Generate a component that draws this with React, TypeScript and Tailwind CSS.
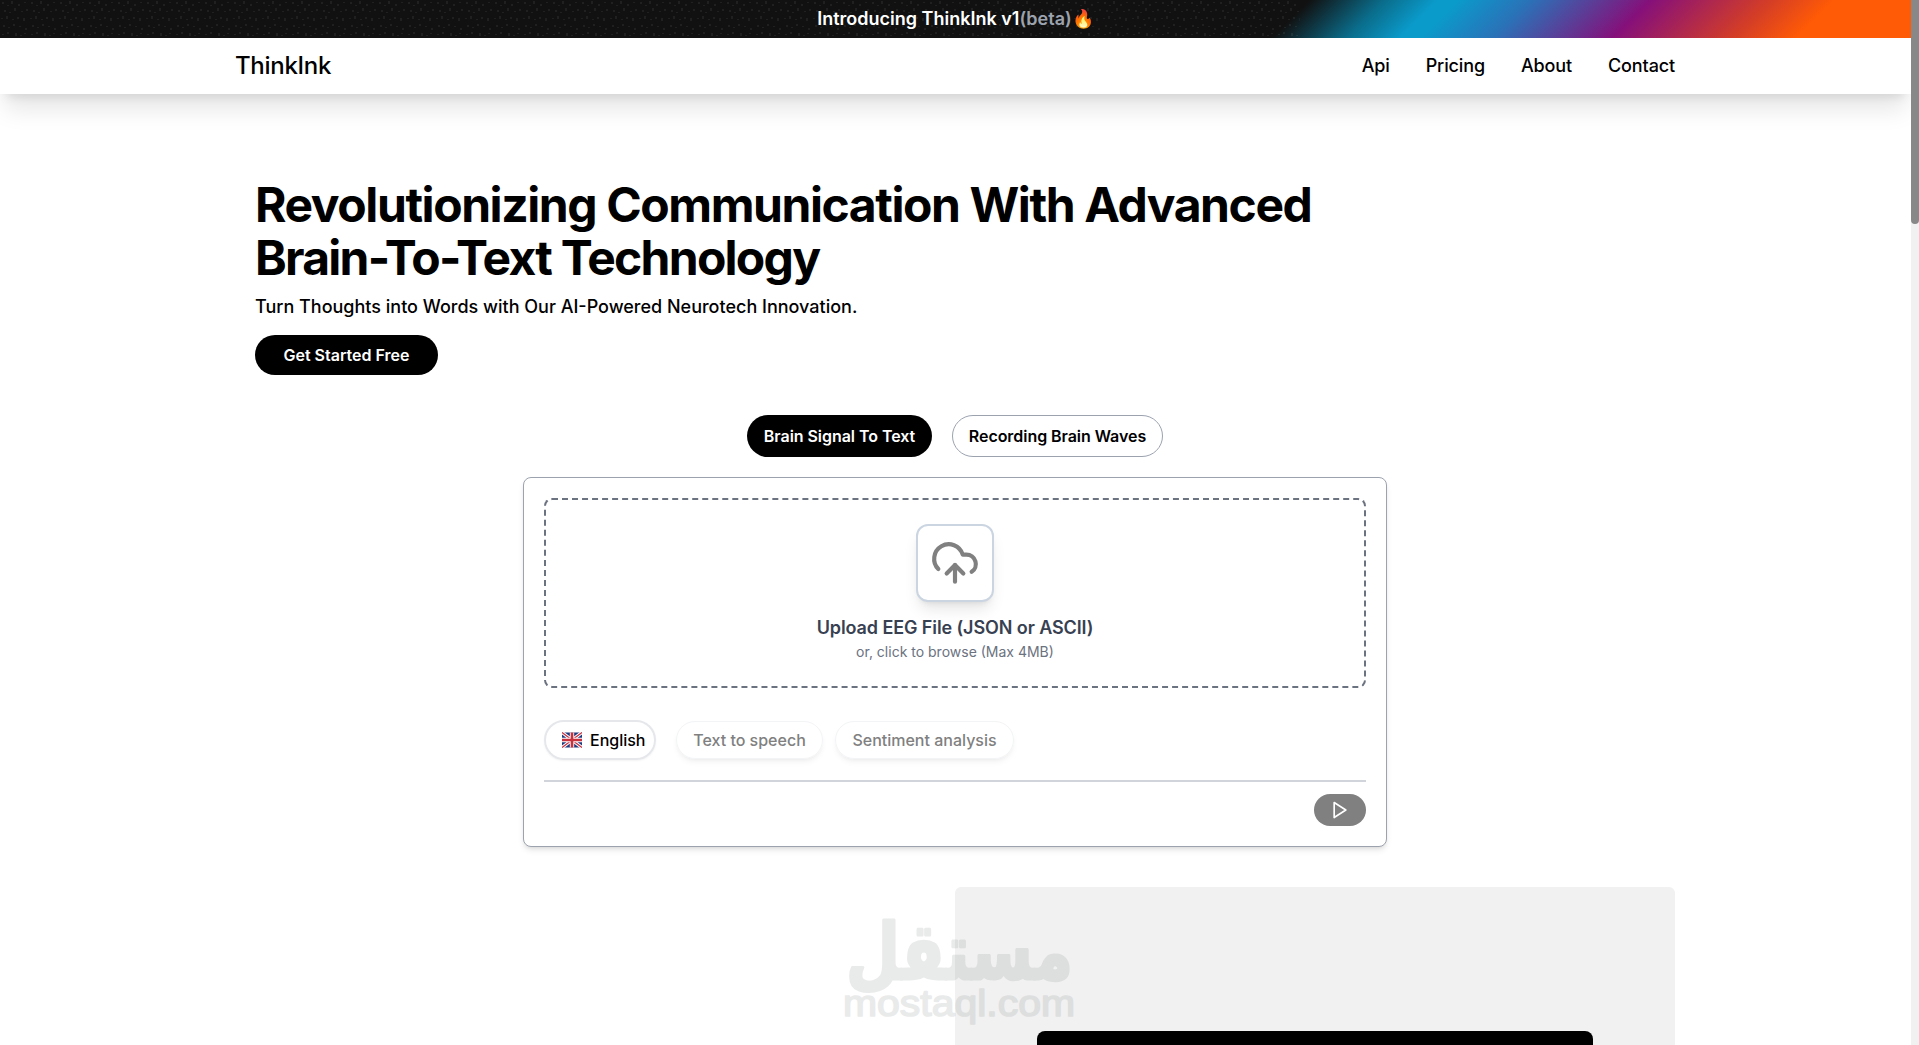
import { CloudUpload } from "lucide-react";

const navLinks = ["Api", "Pricing", "About", "Contact"];

const UkFlag = () => {
  return (
    <svg viewBox="0 0 60 45" className="h-4 w-5">
      <rect width="60" height="45" fill="#1f3a7d" />
      <path d="M0 0L60 45M60 0L0 45" stroke="#fff" strokeWidth="10" />
      <path d="M0 0L60 45M60 0L0 45" stroke="#c8323f" strokeWidth="4" />
      <path d="M30 0V45M0 22.5H60" stroke="#fff" strokeWidth="13" />
      <path d="M30 0V45M0 22.5H60" stroke="#c8323f" strokeWidth="8" />
    </svg>
  );
};

const PlayIcon = () => {
  return (
    <svg
      viewBox="0 0 24 24"
      className="size-5"
      fill="none"
      stroke="currentColor"
      strokeWidth="2"
      strokeLinecap="round"
      strokeLinejoin="round"
    >
      <polygon points="5 3 19 12 5 21 5 3" />
    </svg>
  );
};

const Banner = () => {
  return (
    <div className="relative flex h-[38px] items-center justify-center bg-[linear-gradient(135deg,#111_67.2%,#0a6c8a_71%,#0a9bcb_73.8%,#0a9bcb_74.8%,#2a72b8_78.5%,#85107a_84.7%,#d23c28_90.7%,#ff5a05_94.1%)]">
      {/* speckled grain */}
      <svg className="absolute inset-0 size-full">
        <defs>
          <pattern id="grain" width="29" height="38" patternUnits="userSpaceOnUse">
            <path
              d="M3 2v2M8 5v1M12 1v3M19 4v2M25 2v1M5 10v2M10 12v1M15 8v3M22 11v1M27 9v2M2 18v1M7 16v3M13 19v1M18 17v2M24 18v3M4 25v2M9 27v1M14 24v2M20 26v1M26 28v2M3 34v1M8 32v2M16 33v3M21 35v1M25 33v1"
              stroke="#fff"
              strokeOpacity="0.12"
            />
          </pattern>
        </defs>
        <rect width="68%" height="100%" fill="url(#grain)" />
      </svg>
      <p className="relative text-lg font-semibold text-white">
        Introducing ThinkInk v1<span className="text-[#9ca3af]">(beta)</span>🔥
      </p>
    </div>
  );
};

const Navbar = () => {
  return (
    <nav className="h-14 bg-white pr-px shadow-xl">
      <div className="mx-auto flex h-full w-[1440px] items-center justify-between">
        <span className="text-2xl font-medium tracking-[-0.3px]">ThinkInk</span>
        <ul className="flex gap-9 text-lg font-medium tracking-[-0.13px]">
          {navLinks.map((link) => (
            <li key={link}>{link}</li>
          ))}
        </ul>
      </div>
    </nav>
  );
};

const UploadCard = () => {
  return (
    <div className="mx-auto mt-5 h-[370px] w-[864px] rounded-lg border border-[#9ca3af] bg-white p-5 shadow-md">
      <div className="flex h-[190px] flex-col items-center rounded-lg border-2 border-dashed border-[#6b7280] pt-6">
        <div className="flex size-[78px] items-center justify-center rounded-xl border-2 border-[#cbd5e1] bg-white shadow-lg">
          <CloudUpload className="size-[50px] text-[#808080]" />
        </div>
        <p className="mt-3 text-lg font-semibold tracking-[-0.1px] text-[#374151]">
          Upload EEG File (JSON or ASCII)
        </p>
        <p className="text-sm text-[#6b7280]">or, click to browse (Max 4MB)</p>
      </div>

      <div className="mt-8 flex h-10 items-center font-medium">
        <div className="flex h-10 w-28 items-center gap-2 rounded-full border-2 border-[#e5e7eb] pl-4 shadow-xs">
          <UkFlag />
          <span>English</span>
        </div>
        <div className="ml-5 flex h-[38px] w-[147px] items-center justify-center rounded-full border border-[#f3f4f6] text-[#808080] shadow-md shadow-black/5">
          Text to speech
        </div>
        <div className="ml-3 flex h-[38px] w-[179px] items-center justify-center rounded-full border border-[#f3f4f6] text-[#808080] shadow-md shadow-black/5">
          Sentiment analysis
        </div>
      </div>

      <div className="mt-5 flex justify-end border-t-2 border-[#d1d5db] pt-3">
        <button className="flex h-8 w-[52px] items-center justify-center rounded-full bg-[#808080] text-white">
          <PlayIcon />
        </button>
      </div>
    </div>
  );
};

const Watermark = () => {
  return (
    <svg
      className="absolute left-[840px] top-[910px] h-[124px] w-[240px] overflow-visible opacity-[0.13]"
      fill="#5f6368"
      stroke="#5f6368"
      strokeLinejoin="round"
    >
      <text
        x="233"
        y="69"
        direction="rtl"
        textLength="227"
        lengthAdjust="spacingAndGlyphs"
        fontSize="78"
        fontWeight="700"
        strokeWidth="3"
        fontFamily="DejaVu Sans, sans-serif"
      >
        مستقل
      </text>
      <text
        x="3"
        y="106"
        textLength="232"
        lengthAdjust="spacingAndGlyphs"
        fontSize="37"
        strokeWidth="1.6"
        fontFamily="Liberation Sans, sans-serif"
      >
        mostaql.com
      </text>
    </svg>
  );
};

export default function App() {
  return (
    <div className="relative flex h-[1045px] overflow-hidden bg-white font-['Inter',sans-serif] text-black">
      <div className="w-[1911px] shrink-0">
        <Banner />
        <Navbar />
        <main className="pr-px">
          <div className="mx-auto w-[1440px]">
            <section className="px-5 pt-[84px]">
              <h1 className="text-5xl leading-[53px] font-bold tracking-[-1.42px]">
                Revolutionizing Communication With Advanced
                <br />
                <span className="tracking-[-1.74px]">Brain-To-Text Technology</span>
              </h1>
              <p className="mt-[9px] text-lg font-medium">
                Turn Thoughts into Words with Our AI-Powered Neurotech Innovation.
              </p>
              <button className="mt-3.5 flex h-10 w-[183px] items-center justify-center rounded-full bg-black font-semibold text-white">
                Get Started Free
              </button>
            </section>

            <section className="mt-10">
              <div className="flex justify-center gap-5 font-semibold tracking-[-0.05px]">
                <button className="h-[42px] w-[185px] rounded-full bg-black text-white">
                  Brain Signal To Text
                </button>
                <button className="h-[42px] w-[211px] rounded-full border border-[#9ca3af]">
                  Recording Brain Waves
                </button>
              </div>
              <UploadCard />
            </section>

            <section className="mt-10 flex justify-end">
              <div className="h-[400px] w-[720px] rounded-md bg-[#f1f1f1] px-[82px] pt-36">
                <div className="h-full rounded-t-lg bg-black" />
              </div>
            </section>
          </div>
        </main>
      </div>

      <div className="w-2 shrink-0 bg-[#f1f1f1]">
        <div className="h-56 rounded-b-full bg-[#888]" />
      </div>

      <Watermark />
    </div>
  );
}
